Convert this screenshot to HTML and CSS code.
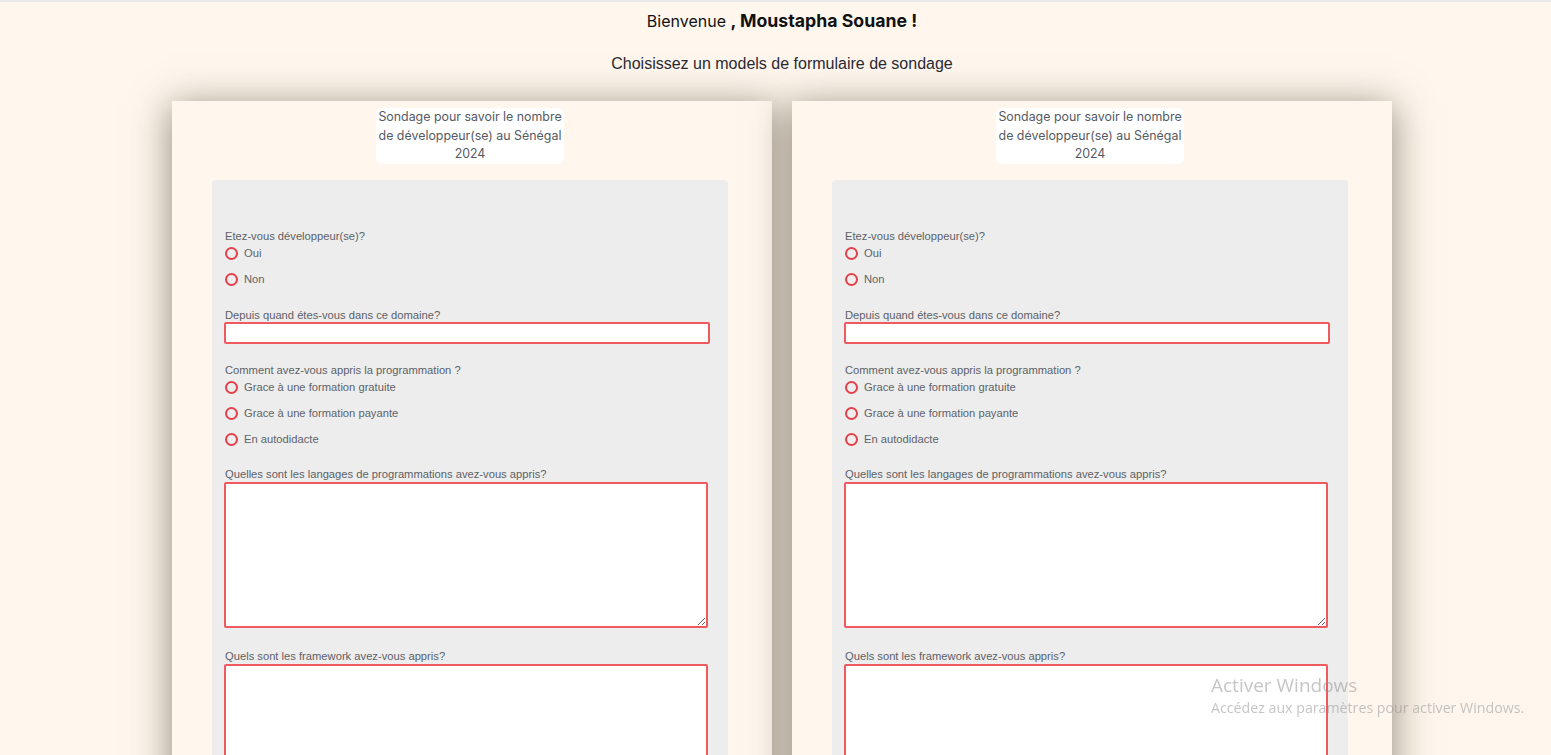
FILE: index.html
```html
<!DOCTYPE html>
<html lang="fr">
<head>
<meta charset="utf-8">
<title>Sondage</title>
<link rel="stylesheet" href="styles.css">
</head>
<body>
<header class="top">
  <p class="welcome">Bienvenue <strong>, Moustapha Souane !</strong></p>
  <p class="choose">Choisissez un models de formulaire de sondage</p>
</header>
<main class="cards">
  <section class="card">
    <h2 class="card-title">Sondage pour savoir le nombre de développeur(se) au Sénégal 2024</h2>
    <form class="panel">
      <div class="group">
        <span class="label">Etez-vous développeur(se)?</span>
        <label class="radio"><input type="radio" name="dev1"><span>Oui</span></label>
        <label class="radio"><input type="radio" name="dev1"><span>Non</span></label>
      </div>
      <div class="group">
        <label class="label" for="since1">Depuis quand étes-vous dans ce domaine?</label>
        <input class="text" id="since1" type="text">
      </div>
      <div class="group group-choice">
        <span class="label">Comment avez-vous appris la programmation ?</span>
        <label class="radio"><input type="radio" name="how1"><span>Grace à une formation gratuite</span></label>
        <label class="radio"><input type="radio" name="how1"><span>Grace à une formation payante</span></label>
        <label class="radio"><input type="radio" name="how1"><span>En autodidacte</span></label>
      </div>
      <div class="group group-area">
        <label class="label label-area" for="lang1">Quelles sont les langages de programmations avez-vous appris?</label>
        <textarea class="area" id="lang1"></textarea>
      </div>
      <div class="group group-area">
        <label class="label label-area" for="fw1">Quels sont les framework avez-vous appris?</label>
        <textarea class="area" id="fw1"></textarea>
      </div>
    </form>
  </section>
  <section class="card">
    <h2 class="card-title">Sondage pour savoir le nombre de développeur(se) au Sénégal 2024</h2>
    <form class="panel">
      <div class="group">
        <span class="label">Etez-vous développeur(se)?</span>
        <label class="radio"><input type="radio" name="dev2"><span>Oui</span></label>
        <label class="radio"><input type="radio" name="dev2"><span>Non</span></label>
      </div>
      <div class="group">
        <label class="label" for="since2">Depuis quand étes-vous dans ce domaine?</label>
        <input class="text" id="since2" type="text">
      </div>
      <div class="group group-choice">
        <span class="label">Comment avez-vous appris la programmation ?</span>
        <label class="radio"><input type="radio" name="how2"><span>Grace à une formation gratuite</span></label>
        <label class="radio"><input type="radio" name="how2"><span>Grace à une formation payante</span></label>
        <label class="radio"><input type="radio" name="how2"><span>En autodidacte</span></label>
      </div>
      <div class="group group-area">
        <label class="label label-area" for="lang2">Quelles sont les langages de programmations avez-vous appris?</label>
        <textarea class="area" id="lang2"></textarea>
      </div>
      <div class="group group-area">
        <label class="label label-area" for="fw2">Quels sont les framework avez-vous appris?</label>
        <textarea class="area" id="fw2"></textarea>
      </div>
    </form>
  </section>
</main>
<div class="activate">
  <p class="activate-title">Activer Windows</p>
  <p class="activate-sub">Accédez aux paramètres pour activer Windows.</p>
</div>
</body>
</html>
```
FILE: styles.css
```css
* { box-sizing: border-box; }

html, body {
  margin: 0;
  padding: 0;
}

body {
  background: #fff7ee;
  border-top: 2px solid #e9e9e9;
  font-family: "Liberation Sans", Arial, sans-serif;
  color: #222;
  overflow: hidden;
}

.top {
  text-align: center;
  padding-left: 13px;
}

.welcome {
  margin: 0;
  padding-top: 9px;
  font-family: Inter, "Liberation Sans", sans-serif;
  font-size: 16px;
  line-height: 20px;
  color: #111;
}

.welcome strong {
  font-size: 17.7px;
  font-weight: 700;
}

.choose {
  margin: 24px 0 0;
  font-family: "Liberation Sans", Arial, sans-serif;
  font-size: 16px;
  line-height: 18px;
  color: #2a2a33;
}

.cards {
  display: flex;
  justify-content: center;
  gap: 20px;
  padding-left: 13px;
  margin-top: 28px;
}

.card {
  width: 600px;
  background: #fff7ee;
  box-shadow: 0 6px 36px 2px rgba(70, 56, 40, 0.55);
  padding: 7px 44px 40px 40px;
  display: flex;
  flex-direction: column;
  align-items: center;
}

.card-title {
  margin: 0;
  width: 188px;
  background: #ffffff;
  border-radius: 6px;
  font-family: Inter, "Liberation Sans", sans-serif;
  font-weight: 400;
  font-size: 12.4px;
  line-height: 18.67px;
  color: #555a62;
  text-align: center;
  padding: 0;
}

.panel {
  margin-top: 16px;
  align-self: stretch;
  background: #ededed;
  border-radius: 4px;
  padding: 49px 12px 40px 12px;
}

.group {
  margin-bottom: 19px;
}

.group-choice {
  margin-bottom: 18px;
}

.group-area {
  margin-bottom: 21px;
}

.label {
  display: block;
  font-family: "Liberation Sans", Arial, sans-serif;
  font-size: 11.2px;
  line-height: 14px;
  color: #5d6166;
  padding-left: 1px;
  margin: 0;
}

.label-area {
  margin-bottom: 1px;
}

.radio {
  display: flex;
  align-items: center;
  height: 20px;
  margin-bottom: 6px;
  padding-left: 1px;
  font-size: 11.2px;
  color: #5f6368;
  cursor: pointer;
}

.radio:last-child {
  margin-bottom: 0;
}

.radio input {
  appearance: none;
  -webkit-appearance: none;
  width: 13px;
  height: 13px;
  margin: 0 6px 0 0;
  border: 2px solid #e2404a;
  border-radius: 50%;
  background: transparent;
  flex: none;
}

.text {
  display: block;
  width: 486px;
  height: 22px;
  border: 2px solid #ef5a5e;
  border-radius: 2px;
  background: #fff;
  outline: none;
}

.area {
  display: block;
  width: 484px;
  height: 146px;
  border: 2px solid #ef5a5e;
  border-radius: 2px;
  background: #fff;
  outline: none;
  resize: both;
}

.activate {
  position: fixed;
  left: 1211px;
  top: 673px;
  font-family: "Open Sans", "Noto Sans", sans-serif;
  color: rgba(150, 150, 150, 0.55);
  pointer-events: none;
}

.activate p {
  margin: 0;
}

.activate-title {
  font-size: 19px;
  line-height: 25px;
}

.activate-sub {
  font-size: 14.2px;
  line-height: 20px;
}
```
